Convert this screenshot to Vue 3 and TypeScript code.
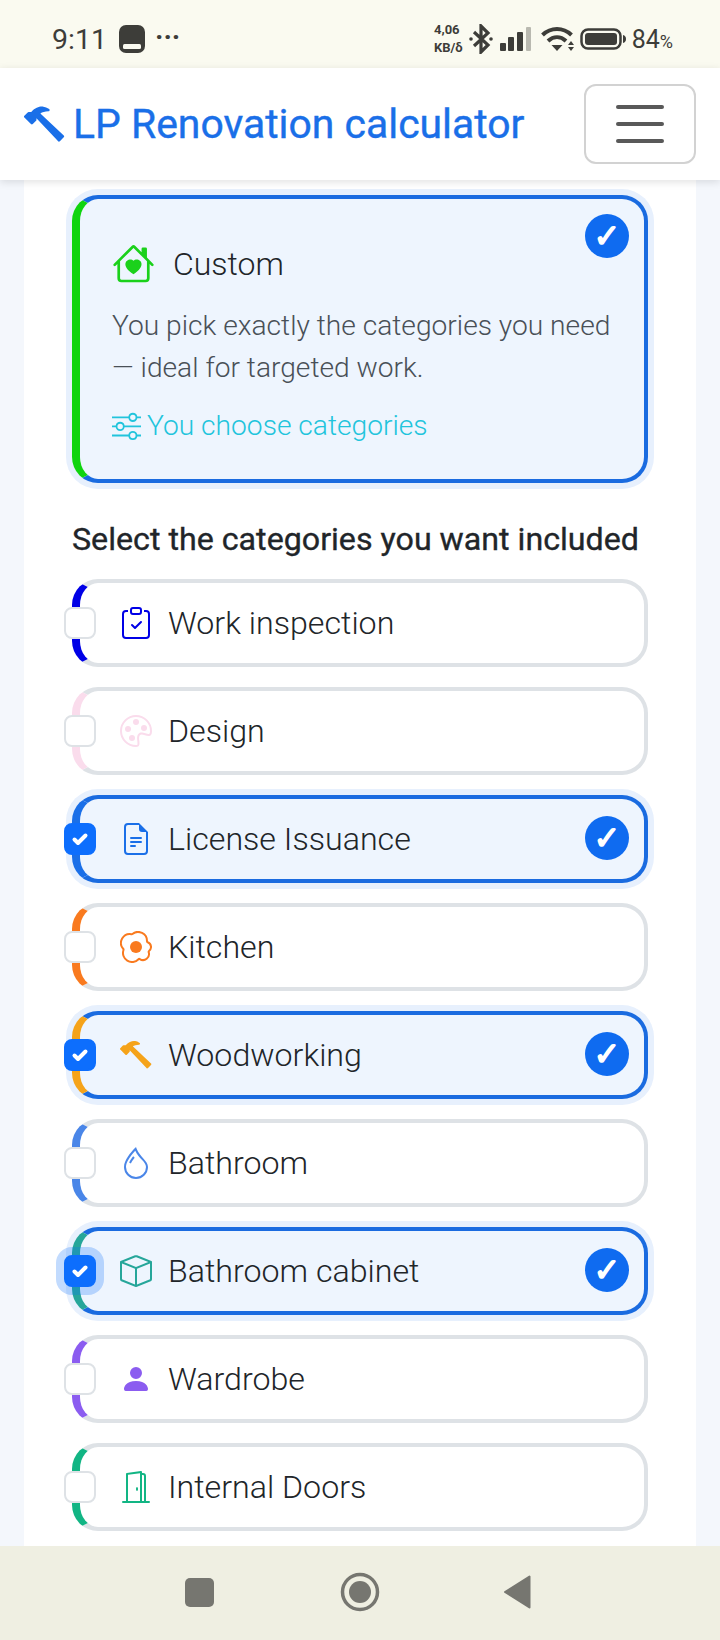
<script setup lang="ts">
interface Category {
  name: string
  color: string
  paths: string[]
  selected?: boolean
  focused?: boolean
}

const categories: Category[] = [
  {
    name: 'Work inspection',
    color: '#0000e6',
    paths: [
      'M10.854 7.146a.5.5 0 0 1 0 .708l-3 3a.5.5 0 0 1-.708 0l-1.5-1.5a.5.5 0 1 1 .708-.708L7.5 9.793l2.646-2.647a.5.5 0 0 1 .708 0',
      'M4 1.5H3a2 2 0 0 0-2 2V14a2 2 0 0 0 2 2h10a2 2 0 0 0 2-2V3.5a2 2 0 0 0-2-2h-1v1h1a1 1 0 0 1 1 1V14a1 1 0 0 1-1 1H3a1 1 0 0 1-1-1V3.5a1 1 0 0 1 1-1h1z',
      'M9.5 1a.5.5 0 0 1 .5.5v1a.5.5 0 0 1-.5.5h-3a.5.5 0 0 1-.5-.5v-1a.5.5 0 0 1 .5-.5zm-3-1A1.5 1.5 0 0 0 5 1.5v1A1.5 1.5 0 0 0 6.5 4h3A1.5 1.5 0 0 0 11 2.5v-1A1.5 1.5 0 0 0 9.5 0z',
    ],
  },
  {
    name: 'Design',
    color: '#fadcec',
    paths: [
      'M8 5a1.5 1.5 0 1 0 0-3 1.5 1.5 0 0 0 0 3m4 3a1.5 1.5 0 1 0 0-3 1.5 1.5 0 0 0 0 3M5.5 7a1.5 1.5 0 1 1-3 0 1.5 1.5 0 0 1 3 0m.5 6a1.5 1.5 0 1 0 0-3 1.5 1.5 0 0 0 0 3',
      'M16 8c0 3.15-1.866 2.585-3.567 2.07C11.42 9.763 10.465 9.473 10 10c-.603.683-.475 1.819-.351 2.92C9.826 14.495 9.996 16 8 16a8 8 0 1 1 8-8m-8 7c.611 0 .654-.171.655-.176.078-.146.124-.464.07-1.119-.014-.168-.037-.37-.061-.591-.052-.464-.112-1.005-.118-1.462-.01-.707.083-1.61.704-2.314.369-.417.845-.578 1.272-.618.404-.038.812.026 1.16.104.343.077.702.186 1.025.284l.028.008c.346.105.658.199.953.266.653.148.904.083.991.024C14.717 9.38 15 9.161 15 8a7 7 0 1 0-7 7',
    ],
  },
  {
    name: 'License Issuance',
    color: '#1a6fe8',
    selected: true,
    paths: [
      'M5.5 7a.5.5 0 0 0 0 1h5a.5.5 0 0 0 0-1zM5 9.5a.5.5 0 0 1 .5-.5h5a.5.5 0 0 1 0 1h-5a.5.5 0 0 1-.5-.5m0 2a.5.5 0 0 1 .5-.5h2a.5.5 0 0 1 0 1h-2a.5.5 0 0 1-.5-.5',
      'M9.5 0H4a2 2 0 0 0-2 2v12a2 2 0 0 0 2 2h8a2 2 0 0 0 2-2V4.5zm0 1v2A1.5 1.5 0 0 0 11 4.5h2V14a1 1 0 0 1-1 1H4a1 1 0 0 1-1-1V2a1 1 0 0 1 1-1z',
    ],
  },
  {
    name: 'Kitchen',
    color: '#f97a1f',
    paths: [
      'M8 11a3 3 0 1 0 0-6 3 3 0 0 0 0 6',
      'M13.997 5.17a5 5 0 0 0-8.101-4.09A5 5 0 0 0 1.28 9.342a5 5 0 0 0 8.336 5.109 3.5 3.5 0 0 0 5.201-4.065 3.001 3.001 0 0 0-.822-5.216zm-1-.034a1 1 0 0 0 .668.977 2.001 2.001 0 0 1 .547 3.478 1 1 0 0 0-.341 1.113 2.5 2.5 0 0 1-3.715 2.905 1 1 0 0 0-1.262.152 4 4 0 0 1-6.67-4.087 1 1 0 0 0-.2-1 4 4 0 0 1 3.693-6.61 1 1 0 0 0 .8-.2 4 4 0 0 1 6.48 3.273z',
    ],
  },
  {
    name: 'Woodworking',
    color: '#f5a31a',
    selected: true,
    paths: [
      'M9.972 2.508a.5.5 0 0 0-.16-.556l-.178-.129a5 5 0 0 0-2.076-.783C6.215.862 4.504 1.229 2.84 3.133H1.786a.5.5 0 0 0-.354.147L.146 4.567a.5.5 0 0 0 0 .706l2.571 2.579a.5.5 0 0 0 .708 0l1.286-1.29a.5.5 0 0 0 .146-.353V5.57l8.387 8.873A.5.5 0 0 0 14 14.5l1.5-1.5a.5.5 0 0 0 .017-.689l-9.129-8.63c.747-.456 1.772-.839 3.112-.839a.5.5 0 0 0 .472-.334',
    ],
  },
  {
    name: 'Bathroom',
    color: '#4a86e8',
    paths: [
      'M7.21.8C7.69.295 8 0 8 0q.164.544.371 1.038c.812 1.946 2.073 3.35 3.197 4.6C12.878 7.096 14 8.345 14 10a6 6 0 0 1-12 0C2 6.668 5.58 2.517 7.21.8m.413 1.021A31 31 0 0 0 5.794 3.99c-.726.95-1.436 2.008-1.96 3.07C3.304 8.133 3 9.138 3 10a5 5 0 0 0 10 0c0-1.201-.796-2.157-2.181-3.7l-.03-.032C9.75 5.11 8.5 3.72 7.623 1.82z',
      'M4.553 7.776c.82-1.641 1.717-2.753 2.093-3.13l.708.708c-.29.29-1.128 1.311-1.907 2.87z',
    ],
  },
  {
    name: 'Bathroom cabinet',
    color: '#26a69a',
    selected: true,
    focused: true,
    paths: [
      'M8.186 1.113a.5.5 0 0 0-.372 0L1.846 3.5 8 5.961 14.154 3.5zM15 4.239l-6.5 2.6v7.922l6.5-2.6V4.24zM7.5 14.762V6.838L1 4.239v7.925zM7.443.184a1.5 1.5 0 0 1 1.114 0l7.129 2.852A.5.5 0 0 1 16 3.5v8.662a1 1 0 0 1-.629.928l-7.185 2.874a.5.5 0 0 1-.372 0L.63 13.09a1 1 0 0 1-.63-.928V3.5a.5.5 0 0 1 .314-.464z',
    ],
  },
  {
    name: 'Wardrobe',
    color: '#8b5cf0',
    paths: ['M3 14s-1 0-1-1 1-4 6-4 6 3 6 4-1 1-1 1zm5-6a3 3 0 1 0 0-6 3 3 0 0 0 0 6'],
  },
  {
    name: 'Internal Doors',
    color: '#12b584',
    paths: [
      'M8.5 10c-.276 0-.5-.448-.5-1s.224-1 .5-1 .5.448.5 1-.224 1-.5 1',
      'M10.828.122A.5.5 0 0 1 11 .5V1h.5A1.5 1.5 0 0 1 13 2.5V15h1.5a.5.5 0 0 1 0 1h-13a.5.5 0 0 1 0-1H3V1.5a.5.5 0 0 1 .43-.495l7-1a.5.5 0 0 1 .398.117M11.5 2H11v13h1V2.5a.5.5 0 0 0-.5-.5M4 1.934V15h6V1.077z',
    ],
  },
]

const hammerPath = categories[4].paths[0]
</script>

<template>
  <div class="screen">
    <div class="statusbar">
      <div class="status-left">
        <span class="clock">9:11</span>
        <svg class="app-icon" viewBox="0 0 26 28">
          <rect width="26" height="28" rx="7" fill="#3d3d39" />
          <rect x="4" y="19" width="18" height="5" rx="1.5" fill="#fafaf0" />
        </svg>
        <span class="dots">···</span>
      </div>
      <div class="status-right">
        <span class="speed">4,06<br />KB/δ</span>
        <svg class="bt" viewBox="0 0 26 30" fill="none" stroke="#3d3d39">
          <path d="M6 8l14 13-7 7V2l7 7L6 22" stroke-width="3.2" />
          <circle cx="3" cy="15" r="1.8" fill="#3d3d39" stroke="none" />
          <circle cx="23" cy="15" r="1.8" fill="#3d3d39" stroke="none" />
        </svg>
        <svg class="signal" viewBox="0 0 31 24">
          <rect x="0" y="16" width="6" height="8" rx="1" fill="#3d3d39" />
          <rect x="8" y="10" width="6" height="14" rx="1" fill="#3d3d39" />
          <rect x="17" y="5" width="6" height="19" rx="1" fill="#3d3d39" />
          <rect x="26" y="0" width="5" height="24" rx="1" fill="#b9b9b0" />
        </svg>
        <svg class="wifi" viewBox="0 0 34 24" fill="none" stroke="#3d3d39" stroke-width="4">
          <path d="M1.5 8C10 0 22 0 30.5 8" />
          <path d="M7 14c5.500-5 12.500-5 18 0" />
          <path d="M10.500 18h11L16 24z" fill="#3d3d39" stroke="none" />
          <path d="M30 14l3 4h-6zM30 24l3-4h-6z" fill="#3d3d39" stroke="none" />
        </svg>
        <svg class="battery" viewBox="0 0 46 22">
          <rect x="1.500" y="1.500" width="39" height="19" rx="6.500" fill="none" stroke="#3d3d39" stroke-width="2.500" />
          <rect x="5" y="5" width="32" height="12" rx="3" fill="#3d3d39" />
          <path d="M43 7c2 .5 3 2 3 4s-1 3.500-3 4z" fill="#3d3d39" />
        </svg>
        <span class="percent">84<small>%</small></span>
      </div>
    </div>

    <nav class="navbar">
      <div class="brand">
        <svg class="brand-icon" viewBox="0 0 16 16"><path :d="hammerPath" /></svg>
        <span>LP Renovation calculator</span>
      </div>
      <button class="toggler" type="button">
        <span></span><span></span><span></span>
      </button>
    </nav>

    <main class="content">
      <div class="panel">
        <section class="plan">
          <div class="plan-head">
            <svg class="plan-icon" viewBox="0 0 16 16">
              <path d="M8 6.982C9.664 5.309 13.825 8.236 8 12 2.175 8.236 6.336 5.309 8 6.982" />
              <path d="M8.707 1.5a1 1 0 0 0-1.414 0L.646 8.146a.5.5 0 0 0 .708.707L2 8.207V13.500A1.500 1.500 0 0 0 3.500 15h9a1.500 1.500 0 0 0 1.500-1.500V8.207l.646.646a.5.5 0 0 0 .708-.707L13 5.793V2.500a.5.5 0 0 0-.5-.5h-1a.5.500 0 0 0-.5.5v1.293zM13 7.207V13.500a.5.5 0 0 1-.5.5h-9a.5.5 0 0 1-.5-.5V7.207l5-5z" />
            </svg>
            <span>Custom</span>
          </div>
          <p class="plan-text">You pick exactly the categories you need — ideal for targeted work.</p>
          <div class="plan-note">
            <svg class="note-icon" viewBox="0 0 16 16">
              <path d="M11.500 2a1.500 1.500 0 1 0 0 3 1.500 1.500 0 0 0 0-3M9.050 3a2.500 2.500 0 0 1 4.900 0H16v1h-2.050a2.500 2.500 0 0 1-4.900 0H0V3zM4.500 7a1.500 1.500 0 1 0 0 3 1.500 1.500 0 0 0 0-3M2.050 8a2.500 2.500 0 0 1 4.900 0H16v1H6.950a2.500 2.500 0 0 1-4.900 0H0V8zm9.450 4a1.500 1.500 0 1 0 0 3 1.500 1.500 0 0 0 0-3m-2.450 1a2.500 2.500 0 0 1 4.900 0H16v1h-2.050a2.500 2.500 0 0 1-4.900 0H0v-1z" />
            </svg>
            <span>You choose categories</span>
          </div>
          <span class="tick plan-tick">✓</span>
        </section>

        <h2 class="section-title">Select the categories you want included</h2>

        <div class="rows">
          <div
            v-for="cat in categories"
            :key="cat.name"
            class="row"
            :class="{ 'row--on': cat.selected }"
            :style="{ borderLeftColor: cat.color }"
          >
            <span class="box" :class="{ 'box--on': cat.selected, 'box--focus': cat.focused }">
              <svg v-if="cat.selected" viewBox="0 0 20 20" fill="none" stroke="#fff" stroke-width="4" stroke-linecap="round" stroke-linejoin="round">
                <path d="M4.500 10.500l3.500 3.500 7.500-7.500" />
              </svg>
            </span>
            <svg class="row-icon" viewBox="0 0 16 16" :style="{ fill: cat.color }">
              <path v-for="p in cat.paths" :key="p" :d="p" />
            </svg>
            <span class="row-name">{{ cat.name }}</span>
            <span v-if="cat.selected" class="tick row-tick">✓</span>
          </div>
        </div>
      </div>
    </main>

    <div class="navkeys">
      <span class="key-square"></span>
      <svg class="key-home" viewBox="0 0 40 40">
        <circle cx="20" cy="20" r="17.500" fill="none" stroke="#767670" stroke-width="3.500" />
        <circle cx="20" cy="20" r="11" fill="#767670" />
      </svg>
      <svg class="key-back" viewBox="0 0 28 34">
        <path d="M26.500 1.500v31L2 17z" fill="#767670" stroke="#767670" stroke-width="2" stroke-linejoin="round" />
      </svg>
    </div>
  </div>
</template>

<style scoped>
.screen {
  width: 720px;
  height: 1640px;
  display: flex;
  flex-direction: column;
  overflow: hidden;
  background: #f4f7fc;
  font-family: Roboto, 'Liberation Sans', sans-serif;
}
.statusbar {
  height: 68px;
  flex: none;
  background: #fafaf0;
  display: flex;
  align-items: center;
  justify-content: space-between;
  padding: 10px 47px 0 52px;
  box-sizing: border-box;
  color: #3d3d39;
}
.status-left,
.status-right {
  display: flex;
  align-items: center;
}
.clock {
  font-size: 28.5px;
}
.app-icon {
  width: 26px;
  height: 28px;
  margin-left: 12px;
}
.dots {
  font-size: 28px;
  font-weight: 700;
  margin-left: 10px;
  line-height: 1;
  padding-bottom: 4px;
}
.speed {
  font-size: 13px;
  font-weight: 700;
  line-height: 18px;
  text-align: left;
}
.bt {
  width: 26px;
  height: 30px;
  margin-left: 5px;
}
.signal {
  width: 31px;
  height: 24px;
  margin-left: 6px;
}
.wifi {
  width: 34px;
  height: 24px;
  margin-left: 10px;
}
.battery {
  width: 46px;
  height: 22px;
  margin-left: 5px;
}
.percent {
  font-size: 25px;
  margin-left: 6px;
}
.percent small {
  font-size: 18px;
}
.navbar {
  height: 112px;
  flex: none;
  box-sizing: border-box;
  background: #fff;
  display: flex;
  align-items: center;
  justify-content: space-between;
  padding: 0 24px;
  box-shadow: 0 2px 8px rgba(0, 0, 0, 0.12);
  position: relative;
  z-index: 2;
}
.brand {
  display: flex;
  align-items: center;
  gap: 8px;
  color: #1a6fe8;
  font-size: 40.9px;
  font-weight: 400;
  -webkit-text-stroke: 0.4px #1a6fe8;
}
.brand-icon {
  width: 41px;
  height: 41px;
  fill: #1a6fe8;
}
.toggler {
  width: 112px;
  height: 80px;
  box-sizing: border-box;
  background: #fff;
  border: 2px solid #d2d2d2;
  border-radius: 12px;
  display: flex;
  flex-direction: column;
  align-items: center;
  justify-content: center;
  gap: 13px;
  padding: 0;
}
.toggler span {
  width: 48px;
  height: 4px;
  border-radius: 2px;
  background: #595959;
}
.content {
  flex: 1;
  min-height: 0;
  padding: 0 24px;
  overflow: hidden;
}
.panel {
  background: #fff;
  padding: 15px 48px 0;
  height: 100%;
  box-sizing: border-box;
}
.plan {
  position: relative;
  height: 288px;
  box-sizing: border-box;
  border: 4px solid #1a6be0;
  border-left: 8px solid #0fd40f;
  border-radius: 26px;
  background: #eef5fe;
  box-shadow: 0 0 0 6px #e7f0fd;
  padding: 43px 30px 0 32px;
}
.plan-head {
  display: flex;
  align-items: center;
  gap: 18px;
  font-size: 32px;
  font-weight: 350;
  color: #212529;
}
.plan-icon {
  width: 43px;
  height: 43px;
  fill: #1bd11b;
}
.plan-text {
  margin: 20px 0 0;
  font-size: 28.16px;
  line-height: 42px;
  font-weight: 300;
  color: #495057;
}
.plan-note {
  display: flex;
  align-items: center;
  gap: 6px;
  margin-top: 20px;
  font-size: 28.16px;
  font-weight: 300;
  color: #21c4dc;
}
.note-icon {
  width: 29px;
  height: 29px;
  fill: #21c4dc;
}
.tick {
  position: absolute;
  width: 44px;
  height: 44px;
  border-radius: 50%;
  background: #0f6bf0;
  color: #fff;
  font-size: 32px;
  -webkit-text-stroke: 1.5px #fff;
  display: flex;
  align-items: center;
  justify-content: center;
  font-family: 'DejaVu Sans', sans-serif;
}
.plan-tick {
  top: 15px;
  right: 15px;
}
.section-title {
  margin: 36px 0 20px;
  font-size: 32.2px;
  line-height: 40px;
  font-weight: 400;
  -webkit-text-stroke: 0.35px #212529;
  color: #212529;
}
.rows {
  display: flex;
  flex-direction: column;
  gap: 20px;
}
.row {
  position: relative;
  height: 88px;
  box-sizing: border-box;
  border: 4px solid #dee2e6;
  border-left: 8px solid;
  border-radius: 26px;
  background: #fff;
  display: flex;
  align-items: center;
  padding-left: 40px;
}
.row--on {
  border-color: #1a6be0;
  background: #eef5fe;
  box-shadow: 0 0 0 6px #e7f0fd;
}
.box {
  position: absolute;
  left: -16px;
  top: 50%;
  margin-top: -16px;
  width: 32px;
  height: 32px;
  box-sizing: border-box;
  border: 2px solid #dee2e6;
  border-radius: 8px;
  background: #fff;
  display: flex;
  align-items: center;
  justify-content: center;
}
.box--on {
  background: #0d6efd;
  border-color: #0d6efd;
}
.box--focus {
  box-shadow: 0 0 0 8px rgba(13, 110, 253, 0.25);
}
.box svg {
  width: 20px;
  height: 20px;
}
.row-icon {
  width: 32px;
  height: 32px;
  flex: none;
}
.row-name {
  margin-left: 16px;
  font-size: 32.16px;
  font-weight: 300;
  color: #212529;
}
.row-tick {
  top: 17px;
  right: 15px;
}
.navkeys {
  height: 94px;
  flex: none;
  background: #efefe2;
  display: flex;
  align-items: center;
  padding-bottom: 2px;
  box-sizing: border-box;
  position: relative;
  z-index: 1;
}
.key-square {
  width: 29px;
  height: 29px;
  border-radius: 5px;
  background: #767670;
  margin-left: 185px;
}
.key-home {
  width: 40px;
  height: 40px;
  margin-left: 126px;
}
.key-back {
  width: 28px;
  height: 34px;
  margin-left: 123px;
}
</style>
